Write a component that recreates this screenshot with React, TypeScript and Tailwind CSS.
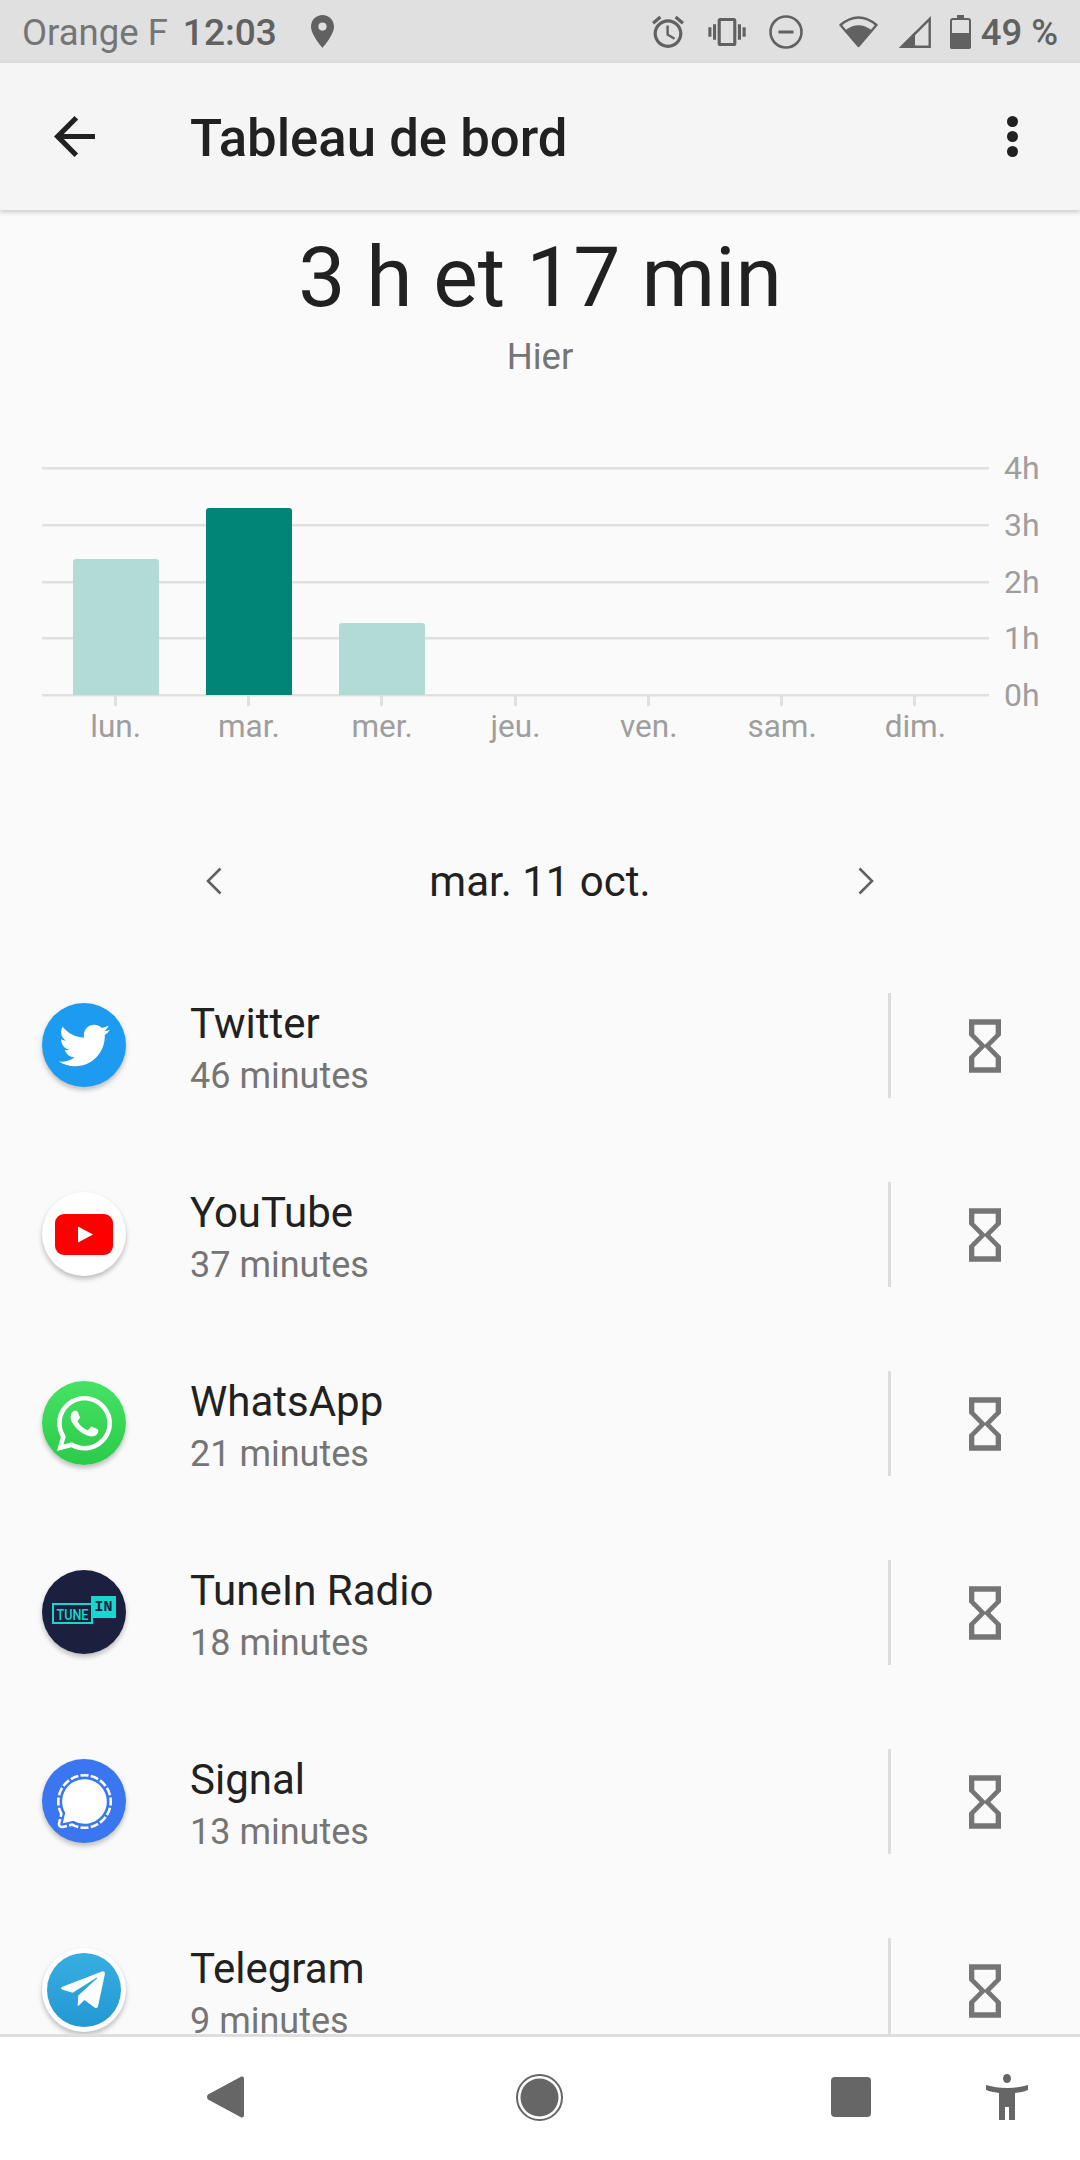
import type { ReactNode } from 'react';
import { FaTelegramPlane, FaTwitter, FaWhatsapp } from 'react-icons/fa';
import { SiSignal } from 'react-icons/si';

const days = ['lun.', 'mar.', 'mer.', 'jeu.', 'ven.', 'sam.', 'dim.'];
const hours = ['4h', '3h', '2h', '1h', '0h'];
const gridLines = [28, 85, 142, 198, 255];
const ticks = [73, 206, 339, 473, 606, 739, 872];

function HourGlass() {
    return (
        <svg viewBox="0 0 24 24" className="w-[64px] h-[64px]" fill="#757575">
            <path d="M6 2v6h.01L6 8.01 10 12l-4 4 .01.01H6V22h12v-5.99h-.01L18 16l-4-4 4-3.99-.01-.01H18V2H6zm10 14.5V20H8v-3.5l4-4 4 4zm-4-5l-4-4V4h8v3.5l-4 4z" />
        </svg>
    );
}

function StatusBar() {
    return (
        <div className="h-[63px] shrink-0 bg-[#e0e0e0] flex items-center pl-[22px] text-[#616161] font-['Roboto',sans-serif]">
            <span className="text-[36.5px] leading-[63px] pt-[2px] text-[#757575]">Orange F</span>
            <span className="ml-[15px] text-[37px] leading-[63px] pt-[2px] font-medium">12:03</span>
            <svg viewBox="5 2 14 20" className="ml-[34px] w-[23px] h-[33px]" fill="#616161">
                <path d="M12 2C8.13 2 5 5.13 5 9c0 5.25 7 13 7 13s7-7.75 7-13c0-3.87-3.13-7-7-7zm0 9.5a2.5 2.5 0 0 1 0-5 2.5 2.5 0 0 1 0 5z" />
            </svg>
            <svg viewBox="2 2 20 20" className="ml-[318px] w-[32px] h-[34px]" fill="#616161">
                <path d="M22 5.72l-4.6-3.86-1.29 1.53 4.6 3.86L22 5.72zM7.88 3.39L6.6 1.86 2 5.71l1.29 1.53 4.59-3.85zM12.5 8H11v6l4.75 2.85.75-1.23-4-2.37V8zM12 4c-4.97 0-9 4.03-9 9s4.03 9 9 9 9-4.03 9-9-4.03-9-9-9zm0 16c-3.87 0-7-3.13-7-7s3.13-7 7-7 7 3.13 7 7-3.13 7-7 7z" />
            </svg>
            <svg viewBox="0 3 24 18" className="ml-[24px] w-[38px] h-[28px]" fill="#616161">
                <path d="M0 15h2V9H0v6zm3 2h2V7H3v10zm19-8v6h2V9h-2zm-3 8h2V7h-2v10zM16.5 3h-9C6.67 3 6 3.67 6 4.5v15c0 .83.67 1.5 1.5 1.5h9c.83 0 1.5-.67 1.5-1.5v-15c0-.83-.67-1.5-1.5-1.5zM16 19H8V5h8v14z" />
            </svg>
            <svg viewBox="0 0 34 34" className="ml-[23px] w-[34px] h-[34px]" fill="none" stroke="#616161" strokeWidth="2.6">
                <circle cx="17" cy="17" r="15.5" />
                <path d="M9.5 17h15" strokeWidth="3" />
            </svg>
            <svg viewBox="0 0 39 33" className="ml-[36px] w-[39px] h-[33px]">
                <path d="M19.5 31 L1.5 10 Q19.5 -5 37.5 10 Z" fill="none" stroke="#616161" strokeWidth="2.4" strokeLinejoin="round" />
                <path d="M19.5 32 L6 15.5 Q19.5 5 33 15.5 Z" fill="#616161" />
            </svg>
            <svg viewBox="0 0 32 32" className="ml-[21px] w-[32px] h-[32px]">
                <path d="M3 30.7 L30.7 3 V30.7 Z" fill="none" stroke="#616161" strokeWidth="2.4" />
                <path d="M0 32 L16 16 V32 Z" fill="#616161" />
            </svg>
            <svg viewBox="0 0 21 34" className="ml-[19px] w-[21px] h-[34px]">
                <rect x="7" y="0" width="7" height="4" fill="#616161" />
                <rect x="1" y="4" width="19" height="29" rx="2" fill="#e0e0e0" stroke="#616161" strokeWidth="2" />
                <rect x="0" y="18" width="21" height="16" rx="2" fill="#616161" />
            </svg>
            <span className="ml-[10px] text-[36.5px] leading-[63px] pt-[2px] font-medium whitespace-nowrap">49 %</span>
        </div>
    );
}

function Toolbar() {
    return (
        <div className="relative z-10 h-[147px] shrink-0 bg-[#f5f5f5] flex items-center pl-[54px] pr-[62px] shadow-[0_2px_5px_rgba(0,0,0,0.2)]">
            <svg viewBox="4 4 16 16" className="w-[41px] h-[41px] -mt-[1px]" fill="#212121">
                <path d="M20 11H7.83l5.59-5.59L12 4l-8 8 8 8 1.41-1.41L7.83 13H20v-2z" />
            </svg>
            <span className="ml-[95px] pt-[3px] text-[#212121] text-[52.7px] leading-[60px] font-medium font-['Roboto',sans-serif]">Tableau de bord</span>
            <div className="ml-auto flex flex-col gap-[4px]">
                <span className="w-[11px] h-[11px] rounded-full bg-[#212121]" />
                <span className="w-[11px] h-[11px] rounded-full bg-[#212121]" />
                <span className="w-[11px] h-[11px] rounded-full bg-[#212121]" />
            </div>
        </div>
    );
}

function UsageChart() {
    return (
        <div className="mt-[28px]">
            <div className="flex h-[267px]">
                <svg viewBox="0 0 1000 267" className="w-[1000px] h-[267px] shrink-0">
                    {gridLines.map((y) => (
                        <rect key={y} x="42" y={y - 1} width="947" height="2.5" fill="#e0e0e0" />
                    ))}
                    {ticks.map((x) => (
                        <rect key={x} x={x + 41} y="255" width="3" height="11" fill="#e0e0e0" />
                    ))}
                    <path d="M73 255V122a3 3 0 0 1 3-3h80a3 3 0 0 1 3 3v133z" fill="#b2dbd5" />
                    <path d="M206 255V71a3 3 0 0 1 3-3h80a3 3 0 0 1 3 3v184z" fill="#008577" />
                    <path d="M339 255V186a3 3 0 0 1 3-3h80a3 3 0 0 1 3 3v69z" fill="#b2dbd5" />
                </svg>
                <div className="flex flex-col">
                    {hours.map((h) => (
                        <span key={h} className="h-[56.75px] shrink-0 leading-[56.75px] text-[32px] text-[#9e9e9e] pl-[4px] font-['Roboto',sans-serif]">{h}</span>
                    ))}
                </div>
            </div>
            <div className="grid grid-cols-7 w-[933px] ml-[49px]">
                {days.map((d) => (
                    <span key={d} className="text-center text-[31.5px] leading-[40px] text-[#9e9e9e] font-['Roboto',sans-serif]">{d}</span>
                ))}
            </div>
        </div>
    );
}

function YouTubeIcon() {
    return (
        <svg viewBox="0 0 58 41" className="w-[58px] h-[41px]">
            <rect width="58" height="41" rx="9" fill="#ff0000" />
            <path d="M23 12.5 L38 20.5 L23 28.5 Z" fill="#ffffff" />
        </svg>
    );
}

function TuneInIcon() {
    return (
        <svg viewBox="0 0 84 84" className="w-[84px] h-[84px]">
            <rect x="11" y="34" width="39" height="19" fill="none" stroke="#14d8cc" strokeWidth="2" />
            <text x="30.5" y="49.5" textAnchor="middle" textLength="32" lengthAdjust="spacingAndGlyphs" fontFamily="Roboto, sans-serif" fontWeight="500" fontSize="15" fill="#14d8cc">TUNE</text>
            <rect x="49" y="26" width="25" height="22" fill="#14d8cc" />
            <text x="61.5" y="41" textAnchor="middle" fontFamily="'Liberation Mono', monospace" fontWeight="700" fontSize="15" fill="#1c203f">IN</text>
        </svg>
    );
}

type AppRow = {
    name: string;
    time: string;
    circle: string;
    icon: ReactNode;
};

const apps: AppRow[] = [
    { name: 'Twitter', time: '46 minutes', circle: 'bg-[#1d9bf0]', icon: <FaTwitter size={51} color="#ffffff" /> },
    { name: 'YouTube', time: '37 minutes', circle: 'bg-white', icon: <YouTubeIcon /> },
    { name: 'WhatsApp', time: '21 minutes', circle: 'bg-linear-to-b from-[#45e265] to-[#2bcb4a]', icon: <FaWhatsapp size={63} color="#ffffff" /> },
    { name: 'TuneIn Radio', time: '18 minutes', circle: 'bg-[#1c203f]', icon: <TuneInIcon /> },
    { name: 'Signal', time: '13 minutes', circle: 'bg-[#3a76f0]', icon: <SiSignal size={55} color="#ffffff" /> },
    {
        name: 'Telegram',
        time: '9 minutes',
        circle: 'bg-white',
        icon: (
            <div className="w-[74px] h-[74px] rounded-full bg-linear-to-b from-[#37aee2] to-[#2498d2] flex items-center justify-center">
                <FaTelegramPlane size={50} color="#ffffff" className="-ml-[2px]" />
            </div>
        ),
    },
];

function UsageRow({ app }: { app: AppRow }) {
    return (
        <div className="h-[189px] shrink-0 flex items-center pl-[42px] font-['Roboto',sans-serif]">
            <div className={`w-[84px] h-[84px] -mt-[1px] shrink-0 rounded-full flex items-center justify-center overflow-hidden shadow-[0_3px_5px_rgba(0,0,0,0.25)] ${app.circle}`}>
                {app.icon}
            </div>
            <div className="ml-[64px] w-[698px] pt-[9px] flex flex-col">
                <span className="text-[42px] leading-[53px] text-[#212121]">{app.name}</span>
                <span className="text-[36px] leading-[53px] text-[#757575]">{app.time}</span>
            </div>
            <div className="w-[3px] h-[105px] bg-[#dadce0]" />
            <div className="ml-[62px]">
                <HourGlass />
            </div>
        </div>
    );
}

function NavBar() {
    return (
        <div className="h-[126px] shrink-0 bg-white border-t-[3px] border-[#dedede] flex items-center pl-[207px] pb-[3px]">
            <svg viewBox="0 0 37 42" className="w-[37px] h-[42px]" fill="#666666">
                <path d="M35 0.5 a2 2 0 0 1 2 2 V39.5 a2 2 0 0 1 -2 2 a2 2 0 0 1 -2 -0.7 L1 23.5 a4 4 0 0 1 0 -5 L33 1.2 a2 2 0 0 1 2 -0.7 z" />
            </svg>
            <svg viewBox="0 0 47 47" className="ml-[272px] w-[47px] h-[47px]">
                <circle cx="23.5" cy="23.5" r="22.5" fill="none" stroke="#666666" strokeWidth="2" />
                <circle cx="23.5" cy="23.5" r="19" fill="#666666" />
            </svg>
            <div className="ml-[268px] w-[40px] h-[40px] rounded-[4px] bg-[#666666]" />
            <svg viewBox="0 0 42 46" className="ml-[115px] w-[42px] h-[46px]" fill="#666666">
                <ellipse cx="21" cy="4.5" rx="4" ry="4.5" />
                <path d="M0 11 C7 13 13 14 21 14 C29 14 35 13 42 11 V16 C37 18 33 18.5 29 19 V46 H23 V33 H19 V46 H13 V19 C9 18.5 5 18 0 16 Z" />
            </svg>
        </div>
    );
}

export default function App() {
    return (
        <div className="w-[1080px] h-[2160px] flex flex-col bg-[#fafafa] overflow-hidden">
            <StatusBar />
            <Toolbar />
            <div className="flex-1 min-h-0 overflow-hidden flex flex-col font-['Roboto',sans-serif]">
                <div className="pt-[30px] flex flex-col items-center">
                    <h1 className="text-[84px] leading-[76px] text-[#212121] font-normal">3 h et 17 min</h1>
                    <p className="mt-[18px] text-[36.5px] leading-[46px] text-[#757575]">Hier</p>
                </div>
                <div className="mt-[32px]">
                    <UsageChart />
                </div>
                <div className="mt-[105px] h-[60px] shrink-0 flex items-center justify-between px-[205px]">
                    <svg viewBox="0 0 17 28" className="w-[17px] h-[28px] -mt-[3px]" fill="none" stroke="#616161" strokeWidth="2.6">
                        <path d="M15.5 1.5 L3 14 L15.5 26.5" />
                    </svg>
                    <span className="text-[42px] leading-[60px] text-[#212121]">mar. 11 oct.</span>
                    <svg viewBox="0 0 17 28" className="w-[17px] h-[28px] -mt-[3px]" fill="none" stroke="#616161" strokeWidth="2.6">
                        <path d="M1.5 1.5 L14 14 L1.5 26.5" />
                    </svg>
                </div>
                <div className="mt-[39px] flex flex-col">
                    {apps.map((app) => (
                        <UsageRow key={app.name} app={app} />
                    ))}
                </div>
            </div>
            <NavBar />
        </div>
    );
}
